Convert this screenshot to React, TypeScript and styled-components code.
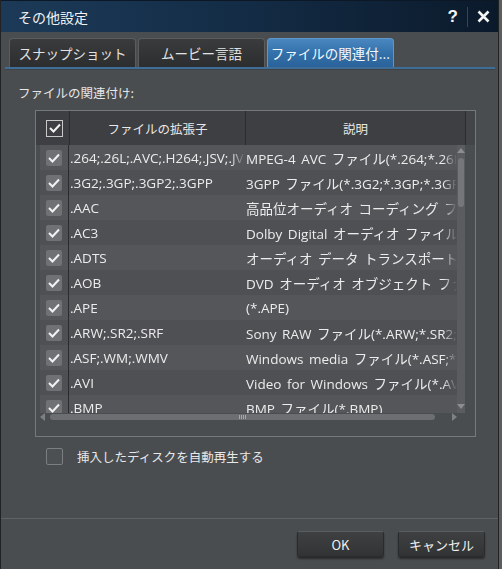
import React from "react";
import styled, { createGlobalStyle } from "styled-components";

const GlobalStyle = createGlobalStyle`
  html, body {
    margin: 0;
    padding: 0;
    background: #5b5d5f;
  }
  body {
    font-family: "Open Sans", "Noto Sans CJK JP", sans-serif;
  }
`;

type Entry = { ext: string; desc: string };

const entries: Entry[] = [
  { ext: ".264;.26L;.AVC;.H264;.JSV;.JVT", desc: "MPEG-4 AVC ファイル(*.264;*.26L;*.AVC)" },
  { ext: ".3G2;.3GP;.3GP2;.3GPP", desc: "3GPP ファイル(*.3G2;*.3GP;*.3GP2;*.3GPP)" },
  { ext: ".AAC", desc: "高品位オーディオ コーディング ファイル(*.AAC)" },
  { ext: ".AC3", desc: "Dolby Digital オーディオ ファイル(*.AC3)" },
  { ext: ".ADTS", desc: "オーディオ データ トランスポート ストリーム" },
  { ext: ".AOB", desc: "DVD オーディオ オブジェクト ファイル(*.AOB)" },
  { ext: ".APE", desc: "(*.APE)" },
  { ext: ".ARW;.SR2;.SRF", desc: "Sony RAW ファイル(*.ARW;*.SR2;*.SRF)" },
  { ext: ".ASF;.WM;.WMV", desc: "Windows media ファイル(*.ASF;*.WM;*.WMV)" },
  { ext: ".AVI", desc: "Video for Windows ファイル(*.AVI)" },
  { ext: ".BMP", desc: "BMP ファイル(*.BMP)" },
];

const tabs = ["スナップショット", "ムービー言語", "ファイルの関連付..."];

const Check = () => (
  <svg width="12" height="10" viewBox="0 0 12 10">
    <polyline points="1,5 4.5,8.5 11,1.5" fill="none" stroke="#f2f2f2" strokeWidth="2" />
  </svg>
);

export default function App() {
  return (
    <>
      <GlobalStyle />
      <Window>
        <TitleBar>
          <Title>その他設定</Title>
          <TitleButtons>
            <Help>?</Help>
            <TitleSep />
            <svg width="13" height="13" viewBox="0 0 13 13">
              <path d="M1.5 1.5 L11.5 11.5 M11.5 1.5 L1.5 11.5" stroke="#f4f4f4" strokeWidth="2.6" />
            </svg>
          </TitleButtons>
        </TitleBar>

        <TabStrip>
          {tabs.map((t, i) => (
            <Tab key={t} active={i === 2}>
              {t}
            </Tab>
          ))}
        </TabStrip>
        <TabLine />

        <Content>
          <SectionLabel>ファイルの関連付け:</SectionLabel>
          <TableFrame>
            <HeaderRow>
              <HeadCheckCell>
                <HeadBox>
                  <Check />
                </HeadBox>
              </HeadCheckCell>
              <HeadCell width={176}>ファイルの拡張子</HeadCell>
              <HeadCell width={220}>説明</HeadCell>
              <HeadFiller />
            </HeaderRow>

            <BodyArea>
              <Viewport>
                {entries.map((e, i) => (
                  <Row key={e.ext} odd={i % 2 === 1}>
                    <CheckCell>
                      <RowBox>
                        <Check />
                      </RowBox>
                    </CheckCell>
                    <ExtCell>{e.ext}</ExtCell>
                    <DescCell>{e.desc}</DescCell>
                  </Row>
                ))}
              </Viewport>
              <VScroll>
                <ArrowUp />
                <VThumb />
                <ArrowDown />
              </VScroll>
            </BodyArea>

            <HScroll>
              <ArrowLeft />
              <HThumb>
                <Grip />
              </HThumb>
              <ArrowRight />
            </HScroll>
          </TableFrame>

          <OptionRow>
            <EmptyBox />
            <span>挿入したディスクを自動再生する</span>
          </OptionRow>
        </Content>

        <Separator />
        <Footer>
          <DialogButton>OK</DialogButton>
          <DialogButton>キャンセル</DialogButton>
        </Footer>
      </Window>
    </>
  );
}

const Window = styled.div`
  width: 499px;
  height: 569px;
  box-sizing: border-box;
  border-left: 1px solid #202224;
  border-right: 1px solid #202224;
  background: #4a4d50;
  display: flex;
  flex-direction: column;
  color: #e4e4e4;
  font-family: "Open Sans", "Noto Sans CJK JP", sans-serif;
`;

const TitleBar = styled.div`
  height: 32px;
  flex: none;
  display: flex;
  align-items: center;
  justify-content: space-between;
  padding: 0 8px 0 17px;
  background: linear-gradient(90deg, #1c3a58 0%, #142d47 45%, #0b1a2b 100%);
  border-top: 1px solid #0c1826;
  box-sizing: border-box;
`;

const Title = styled.div`
  font-family: "Noto Sans CJK JP", sans-serif;
  font-size: 14px;
  color: #f2f2f2;
`;

const TitleButtons = styled.div`
  display: flex;
  align-items: center;
  gap: 9px;
`;

const Help = styled.span`
  font-family: "Liberation Sans", sans-serif;
  font-weight: bold;
  font-size: 17px;
  color: #f4f4f4;
`;

const TitleSep = styled.span`
  width: 1px;
  height: 20px;
  background: #2d4560;
`;

const TabStrip = styled.div`
  display: flex;
  gap: 1px;
  margin-top: 6px;
  padding-left: 8px;
  height: 29px;
`;

const Tab = styled.div<{ active?: boolean }>`
  width: 127px;
  box-sizing: border-box;
  display: flex;
  align-items: center;
  justify-content: center;
  font-family: "Noto Sans CJK JP", sans-serif;
  font-size: 13.5px;
  color: ${(p) => (p.active ? "#f4f8fc" : "#e2e2e2")};
  border: 1px solid ${(p) => (p.active ? "#5f97c9" : "#5b5c5e")};
  border-bottom: none;
  border-radius: 4px 4px 0 0;
  background: ${(p) =>
    p.active
      ? "linear-gradient(180deg, #4a87c0 0%, #3371aa 50%, #2a6299 100%)"
      : "linear-gradient(180deg, #3a3b3d 0%, #2c2d2f 100%)"};
  & + & {
    margin-left: ${(p) => (p.active ? "1px" : "0")};
  }
`;

const TabLine = styled.div`
  height: 2px;
  margin: 0 3px 0 4px;
  background: #3d6d98;
  box-shadow: 0 1px 0 #3f4245;
`;

const Content = styled.div`
  flex: 1;
  padding-left: 17px;
  display: flex;
  flex-direction: column;
`;

const SectionLabel = styled.div`
  margin-top: 15px;
  height: 18px;
  line-height: 18px;
  font-family: "Noto Sans CJK JP", sans-serif;
  font-size: 12.5px;
  color: #e6e6e6;
`;

const TableFrame = styled.div`
  margin: 8px 0 0 17px;
  width: 441px;
  height: 327px;
  box-sizing: border-box;
  border: 1px solid #76787b;
  display: flex;
  flex-direction: column;
`;

const HeaderRow = styled.div`
  display: flex;
  height: 34px;
  background: #3e3f42;
  flex: none;
`;

const HeadCheckCell = styled.div`
  width: 33px;
  display: flex;
  align-items: center;
  justify-content: center;
  padding-left: 4px;
  box-sizing: border-box;
`;

const HeadBox = styled.div`
  width: 15px;
  height: 15px;
  border: 1px solid #c9c9c9;
  display: flex;
  align-items: center;
  justify-content: center;
`;

const HeadCell = styled.div<{ width: number }>`
  width: ${(p) => p.width}px;
  box-sizing: border-box;
  border-left: 1px solid #2b2c2e;
  display: flex;
  align-items: center;
  justify-content: center;
  font-family: "Noto Sans CJK JP", sans-serif;
  font-size: 12.5px;
  color: #e8e8e8;
`;

const HeadFiller = styled.div`
  flex: 1;
  border-left: 1px solid #2b2c2e;
  background: #434447;
`;

const BodyArea = styled.div`
  display: flex;
  height: 268px;
  padding: 0 10px 0 4px;
  flex: none;
`;

const Viewport = styled.div`
  width: 418px;
  overflow: hidden;
`;

const Row = styled.div<{ odd?: boolean }>`
  display: flex;
  height: 25px;
  align-items: center;
  background: ${(p) => (p.odd ? "#4e5053" : "#545659")};
`;

const CheckCell = styled.div`
  width: 29px;
  height: 100%;
  display: flex;
  align-items: center;
  justify-content: center;
  border-right: 1px solid #2a2b2d;
  box-sizing: border-box;
`;

const RowBox = styled.div`
  width: 16px;
  height: 16px;
  border-radius: 2px;
  background: #6f7174;
  display: flex;
  align-items: center;
  justify-content: center;
`;

const cellText = `
  font-size: 13.5px;
  white-space: nowrap;
  overflow: hidden;
  color: #ececec;
  word-spacing: 2px;
  -webkit-mask-image: linear-gradient(90deg, #000 calc(100% - 14px), transparent);
  mask-image: linear-gradient(90deg, #000 calc(100% - 14px), transparent);
`;

const ExtCell = styled.div`
  width: 176px;
  padding-left: 1px;
  box-sizing: border-box;
  ${cellText}
`;

const DescCell = styled.div`
  flex: 1;
  padding-left: 1px;
  ${cellText}
`;

const VScroll = styled.div`
  width: 8px;
  background: #5a5c5f;
  display: flex;
  flex-direction: column;
  align-items: center;
  padding: 3px 0 4px;
  box-sizing: border-box;
`;

const ArrowUp = styled.div`
  width: 0;
  height: 0;
  border-left: 4px solid transparent;
  border-right: 4px solid transparent;
  border-bottom: 5px solid #8b8d90;
`;

const ArrowDown = styled.div`
  width: 0;
  height: 0;
  border-left: 4px solid transparent;
  border-right: 4px solid transparent;
  border-top: 5px solid #8b8d90;
  margin-top: auto;
`;

const VThumb = styled.div`
  width: 6px;
  height: 49px;
  margin-top: 5px;
  border-radius: 3px;
  background: #747679;
`;

const HScroll = styled.div`
  display: flex;
  align-items: center;
  height: 8px;
  margin: 0 18px 0 4px;
  gap: 4px;
`;

const ArrowLeft = styled.div`
  width: 0;
  height: 0;
  border-top: 4px solid transparent;
  border-bottom: 4px solid transparent;
  border-right: 5px solid #7e8083;
`;

const ArrowRight = styled.div`
  width: 0;
  height: 0;
  border-top: 4px solid transparent;
  border-bottom: 4px solid transparent;
  border-left: 5px solid #7e8083;
  margin-left: auto;
`;

const HThumb = styled.div`
  width: 385px;
  height: 6px;
  margin-left: 1px;
  border-radius: 3px;
  background: #6c6e71;
  display: flex;
  align-items: center;
  justify-content: center;
`;

const Grip = styled.div`
  width: 7px;
  height: 4px;
  background: repeating-linear-gradient(90deg, #a4a6a8 0 1px, transparent 1px 2px);
`;

const OptionRow = styled.div`
  margin: 10px 0 0 28px;
  display: flex;
  align-items: center;
  gap: 14px;
  font-family: "Noto Sans CJK JP", sans-serif;
  font-size: 12.5px;
  color: #e8e8e8;
`;

const EmptyBox = styled.div`
  width: 17px;
  height: 17px;
  box-sizing: border-box;
  border: 1px solid #7c7e81;
  border-radius: 2px;
  background: #4d5053;
`;

const Separator = styled.div`
  height: 1px;
  background: #606265;
  flex: none;
`;

const Footer = styled.div`
  height: 50px;
  flex: none;
  display: flex;
  justify-content: flex-end;
  align-items: flex-start;
  gap: 14px;
  padding: 12px 13px 0 0;
  box-sizing: border-box;
`;

const DialogButton = styled.div`
  width: 87px;
  height: 26px;
  box-sizing: border-box;
  display: flex;
  align-items: center;
  justify-content: center;
  border-radius: 3px;
  border: 1px solid #2a2b2d;
  border-top-color: #5b5d60;
  background: linear-gradient(180deg, #3e4042 0%, #313335 100%);
  box-shadow: 0 2px 2px rgba(0, 0, 0, 0.45);
  font-family: "Noto Sans CJK JP", sans-serif;
  font-size: 13px;
  color: #f0f0f0;
`;
